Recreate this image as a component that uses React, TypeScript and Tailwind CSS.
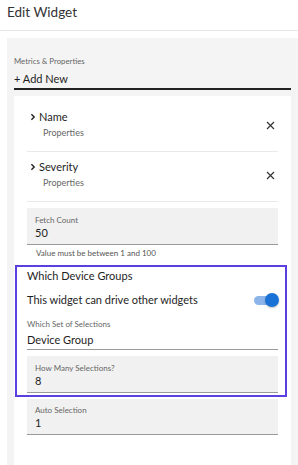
import React from 'react';

const font = { fontFamily: 'Lato, "Open Sans", sans-serif' };

function Chevron() {
  return (
    <svg width="6" height="8" viewBox="0 0 6 8" className="mr-[3px]">
      <path d="M1.4 1.2 L4.2 4 L1.4 6.8" fill="none" stroke="#222" strokeWidth="1.4" />
    </svg>
  );
}

function CloseIcon() {
  return (
    <svg width="9" height="9" viewBox="0 0 9 9">
      <path d="M1 1 L8 8 M8 1 L1 8" stroke="#333" strokeWidth="1.2" />
    </svg>
  );
}

function MetricRow({ name }: { name: string }) {
  return (
    <div className="flex items-center justify-between border-b border-[#e9e9e9] pt-[7px] pb-[10px]">
      <div>
        <div className="flex items-center pl-[3px] text-[11px] leading-[16px] text-[#1e1e1e]">
          <Chevron />
          {name}
        </div>
        <div className="pl-[16px] text-[9px] leading-[16px] text-[#666]">Properties</div>
      </div>
      <div className="pr-[3px]">
        <CloseIcon />
      </div>
    </div>
  );
}

function Field({ label, value, top }: { label: string; value: string; top: string }) {
  return (
    <div className={`bg-[#f1f1f1] border-b border-[#9a9a9a] pl-[8px] pb-[3px] ${top}`}>
      <div className="text-[8px] leading-[10px] text-[#666]">{label}</div>
      <div className="text-[11px] leading-[16px] text-[#1e1e1e]">{value}</div>
    </div>
  );
}

export default function App() {
  return (
    <div className="w-[298px] h-[465px] overflow-hidden bg-white flex flex-col" style={font}>
      <div className="h-[31px] shrink-0 border-b border-[#e6e6e6] pl-[7px] pt-[2px] text-[13.5px] leading-[20px] text-[#333]">
        Edit Widget
      </div>
      <div className="flex-1 ml-[7px] mt-[7px] bg-[#f4f4f4] px-[7px] pt-[18px] flex flex-col">
        <div className="text-[7.8px] leading-[10px] text-[#666]">Metrics &amp; Properties</div>
        <div className="mt-[5px] pb-[1px] border-b-2 border-[#222] text-[11px] leading-[16px] text-[#1e1e1e]">
          + Add New
        </div>
        <div className="flex-1 mt-[6px] bg-white rounded-t-[2px] px-[13px] pt-[6px]">
          <MetricRow name="Name" />
          <MetricRow name="Severity" />
          <Field label="Fetch Count" value="50" top="mt-[6px] pt-[7px]" />
          <div className="mt-[2px] pl-[9px] text-[8px] leading-[12px] text-[#555]">
            Value must be between 1 and 100
          </div>
          <div className="mt-[6px] ml-[-12px] mr-[-9px] border-2 border-[#5b3fe0] pl-[10px] pr-[7px] pb-[2px]">
            <div className="pt-[1px] text-[11px] leading-[16px] text-[#1e1e1e]">Which Device Groups</div>
            <div className="mt-[6px] h-[20px] flex items-center justify-between text-[11px] text-[#1e1e1e]">
              <span>This widget can drive other widgets</span>
              <div className="relative w-[24px] h-[14px] flex items-center">
                <div className="w-[22px] h-[9px] rounded-full bg-[#8db5ea]" />
                <div className="absolute right-[-1px] w-[14px] h-[14px] rounded-full bg-[#1a72d6] shadow-[0_1px_2px_rgba(0,0,0,0.25)]" />
              </div>
            </div>
            <div className="mt-[9px] text-[8px] leading-[10px] text-[#666]">Which Set of Selections</div>
            <div className="mt-[3px] pb-[1px] border-b border-[#9a9a9a] text-[11px] leading-[16px] text-[#1e1e1e]">
              Device Group
            </div>
            <Field label="How Many Selections?" value="8" top="mt-[6px] pt-[7px]" />
          </div>
          <Field label="Auto Selection" value="1" top="mt-[2px] pt-[6px]" />
        </div>
      </div>
    </div>
  );
}
